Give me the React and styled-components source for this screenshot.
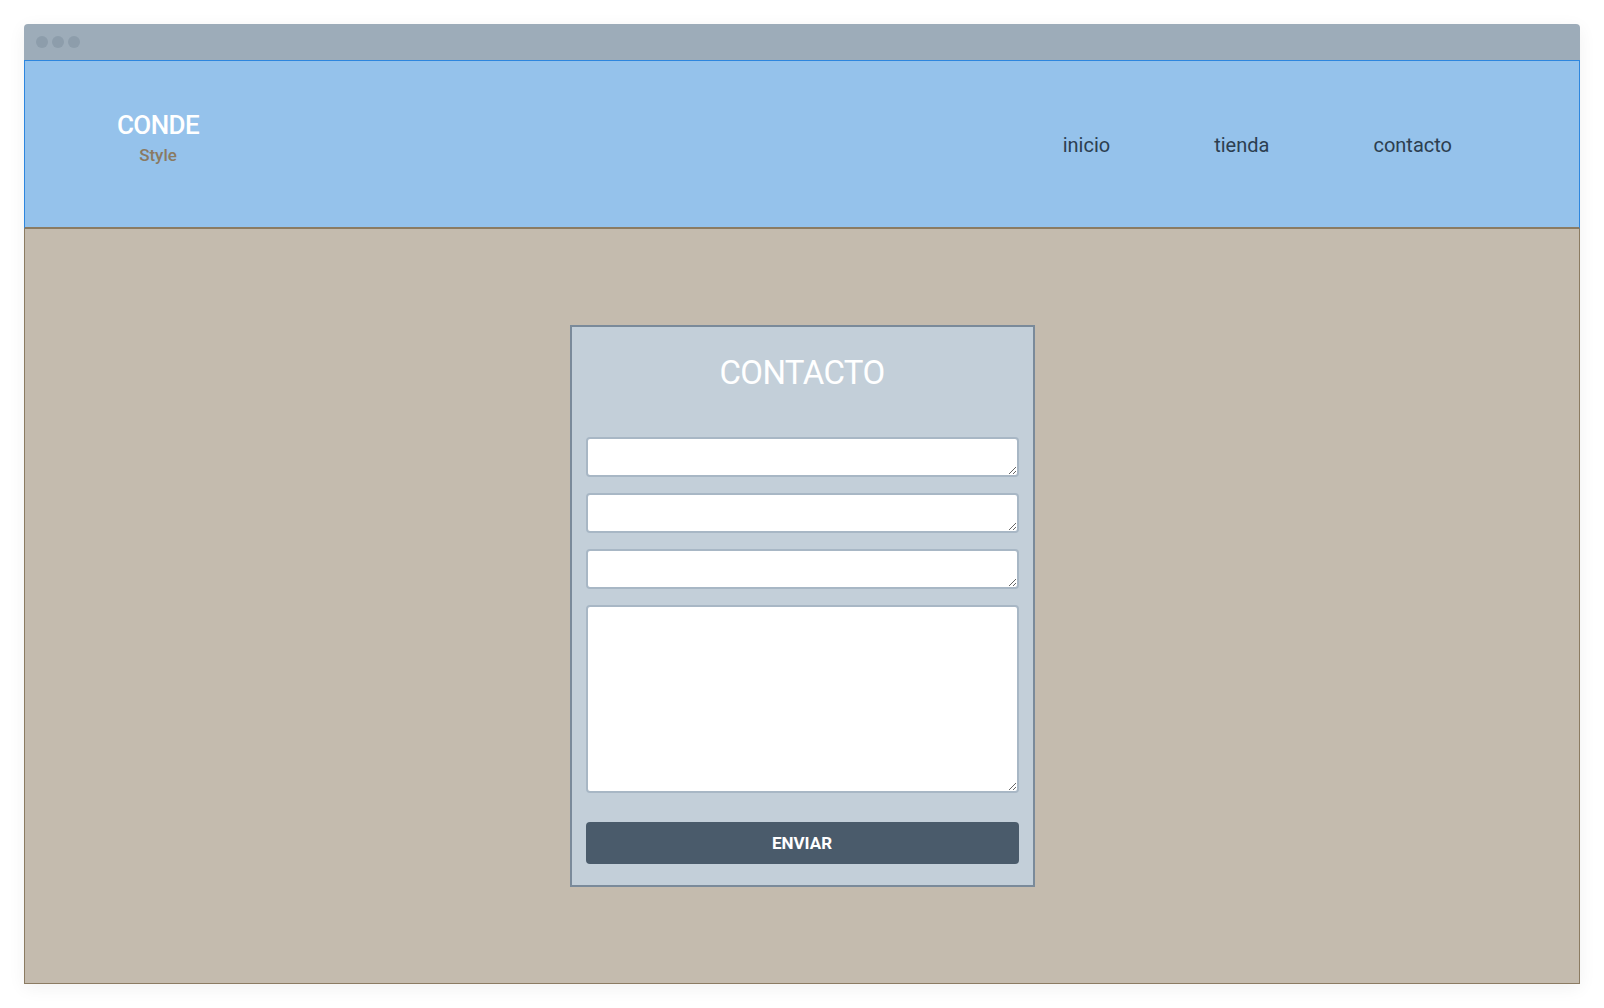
import React from "react";
import styled, { createGlobalStyle } from "styled-components";

const GlobalStyle = createGlobalStyle`
  * {
    margin: 0;
    padding: 0;
    box-sizing: border-box;
  }
  body {
    background: #ffffff;
    font-family: Roboto, "Liberation Sans", sans-serif;
  }
`;

const App = () => {
  return (
    <>
      <GlobalStyle />
      <Page>
        <Window>
          <TitleBar>
            <Dot />
            <Dot />
            <Dot />
          </TitleBar>
          <Header>
            <Logo>
              <LogoName>CONDE</LogoName>
              <LogoSub>Style</LogoSub>
            </Logo>
            <Nav>
              <NavLink href="#">inicio</NavLink>
              <NavLink href="#">tienda</NavLink>
              <NavLink href="#">contacto</NavLink>
            </Nav>
          </Header>
          <Main>
            <Card>
              <Title>CONTACTO</Title>
              <Fields>
                <Field rows={1} />
                <Field rows={1} />
                <Field rows={1} />
                <Field rows={8} $tall />
              </Fields>
              <SendButton type="button">ENVIAR</SendButton>
            </Card>
          </Main>
        </Window>
      </Page>
    </>
  );
};

const Page = styled.div`
  padding: 24px;
  width: 1604px;
  height: 1008px;
`;

const Window = styled.div`
  width: 1556px;
  height: 960px;
  display: flex;
  flex-direction: column;
  border-radius: 4px 4px 0 0;
  box-shadow: 0 4px 18px rgba(0, 0, 0, 0.06);
`;

const TitleBar = styled.div`
  height: 36px;
  background: #9dacb9;
  border-radius: 4px 4px 0 0;
  display: flex;
  align-items: center;
  gap: 4px;
  padding-left: 12px;
`;

const Dot = styled.span`
  width: 12px;
  height: 12px;
  border-radius: 50%;
  background: #8d9dab;
`;

const Header = styled.header`
  height: 169px;
  background: #95c2eb;
  border: 1px solid #2e86de;
  border-bottom: 2px solid #8b7b62;
  display: flex;
  align-items: center;
  justify-content: space-between;
  padding: 0 127px 0 92px;
`;

const Logo = styled.div`
  display: flex;
  flex-direction: column;
  align-items: center;
  margin-top: -13px;
`;

const LogoName = styled.span`
  font-size: 26px;
  font-weight: 500;
  color: #ffffff;
  letter-spacing: -0.6px;
  line-height: 32px;
  margin-bottom: 3px;
`;

const LogoSub = styled.span`
  font-size: 17px;
  font-weight: 500;
  color: #8a7a62;
  line-height: 22px;
`;

const Nav = styled.nav`
  display: flex;
  gap: 104px;
  margin-top: 2px;
`;

const NavLink = styled.a`
  font-size: 20px;
  color: #2c3e50;
  text-decoration: none;
`;

const Main = styled.main`
  flex: 1;
  background: #c4bbae;
  border: 1px solid #8b7b62;
  border-top: none;
  display: flex;
  align-items: center;
  justify-content: center;
`;

const Card = styled.form`
  width: 465px;
  background: #c3cfd9;
  border: 2px solid #7a8a9a;
  padding: 26px 14px 21px 14px;
  display: flex;
  flex-direction: column;
`;

const Title = styled.h2`
  font-size: 33px;
  font-weight: 400;
  color: #ffffff;
  text-align: center;
  letter-spacing: -0.6px;
  line-height: 40px;
  margin-bottom: 44px;
`;

const Fields = styled.div`
  display: flex;
  flex-direction: column;
  gap: 16px;
`;

const Field = styled.textarea`
  display: block;
  width: 100%;
  height: ${(p) => (p.$tall ? "188px" : "40px")};
  border: 2px solid #a8b7c5;
  border-radius: 4px;
  background: #ffffff;
  font-family: Roboto, "Liberation Sans", sans-serif;
  outline: none;
`;

const SendButton = styled.button`
  margin-top: 29px;
  height: 42px;
  border: none;
  border-radius: 4px;
  background: #4a5b6b;
  color: #ffffff;
  font-family: Roboto, "Liberation Sans", sans-serif;
  font-size: 17px;
  font-weight: 700;
`;

export default App;
